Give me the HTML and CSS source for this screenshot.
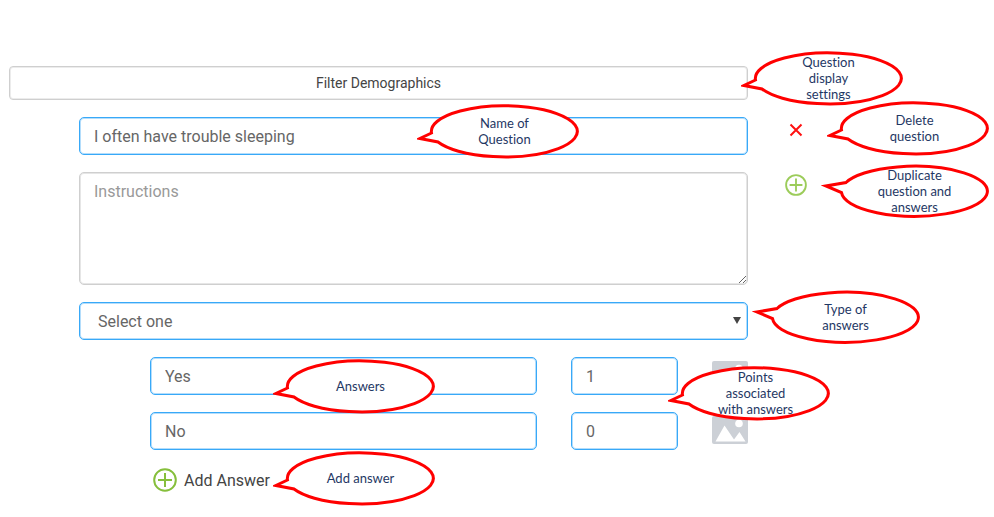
FILE: index.html
```html
<!DOCTYPE html>
<html lang="en">
<head>
    <meta charset="UTF-8">
    <meta name="viewport" content="width=device-width, initial-scale=1.0">
    <title>Question Editor</title>
    <link rel="stylesheet" href="styles.css">
</head>

<body>
    <!-- Shared shapes -->
    <svg class="sprite" aria-hidden="true">
        <symbol id="bubble-down" viewBox="0 0 168 56">
            <path d="M14.5 30 A73 25.500 0 1 1 21 39 L3 35.500 Z" />
        </symbol>
        <symbol id="bubble-up" viewBox="0 0 168 56">
            <path d="M25 19.5 A73 25 0 1 1 20.5 29.5 L5 23 Z" />
        </symbol>
        <symbol id="plus" viewBox="0 0 24 24">
            <circle cx="12" cy="12" r="10.8" />
            <path d="M12 5v14M5 12h14" />
        </symbol>
        <symbol id="picture" viewBox="0 0 36 28">
            <rect width="36" height="28" rx="2" fill="#ccd0d6" />
            <circle cx="27" cy="7.5" r="3.8" fill="#fff" />
            <path d="M3.500 25.500L12.500 9.500l9.500 14 5.500-7.500 6 9.500z" fill="#fff" />
        </symbol>
    </svg>

    <main class="page">
        <form class="editor">
            <button type="button" class="filter-button">Filter Demographics</button>

            <div class="row">
                <input type="text" class="field active" aria-label="Question" value="I often have trouble sleeping">
                <button type="button" class="icon-button" aria-label="Delete question">
                    <svg class="icon-delete" viewBox="0 0 14 14"><path d="M1.500 1.500l11 11M12.500 1.500l-11 11" /></svg>
                </button>
            </div>

            <div class="row">
                <textarea class="field instructions" aria-label="Instructions" placeholder="Instructions"></textarea>
                <button type="button" class="icon-button" aria-label="Duplicate question">
                    <svg class="icon-plus small"><use href="#plus" /></svg>
                </button>
            </div>

            <div class="row">
                <div class="select-box">
                    <select class="field active" aria-label="Type of answers">
                        <option>Select one</option>
                    </select>
                </div>
            </div>

            <div class="row">
                <div class="answer">
                    <input type="text" class="field active" aria-label="Answer 1" value="Yes">
                    <input type="text" class="field active points" aria-label="Points 1" value="1">
                    <svg class="icon-picture"><use href="#picture" /></svg>
                </div>
            </div>

            <div class="row">
                <div class="answer">
                    <input type="text" class="field active" aria-label="Answer 2" value="No">
                    <input type="text" class="field active points" aria-label="Points 2" value="0">
                    <svg class="icon-picture"><use href="#picture" /></svg>
                </div>
            </div>

            <button type="button" class="add-answer">
                <svg class="icon-plus"><use href="#plus" /></svg>
                Add Answer
            </button>
        </form>

        <!-- Callouts -->
        <div class="callout note-settings">
            <svg><use href="#bubble-down" /></svg>
            <p>Question<br>display<br>settings</p>
        </div>
        <div class="callout note-name">
            <svg><use href="#bubble-down" /></svg>
            <p>Name of<br>Question</p>
        </div>
        <div class="callout note-delete">
            <svg><use href="#bubble-down" /></svg>
            <p>Delete<br>question</p>
        </div>
        <div class="callout up note-duplicate">
            <svg><use href="#bubble-up" /></svg>
            <p>Duplicate<br>question and<br>answers</p>
        </div>
        <div class="callout up note-type">
            <svg><use href="#bubble-up" /></svg>
            <p>Type of<br>answers</p>
        </div>
        <div class="callout note-answers">
            <svg><use href="#bubble-down" /></svg>
            <p>Answers</p>
        </div>
        <div class="callout note-points">
            <svg><use href="#bubble-down" /></svg>
            <p>Points<br>associated<br>with answers</p>
        </div>
        <div class="callout note-add">
            <svg><use href="#bubble-down" /></svg>
            <p>Add answer</p>
        </div>
    </main>
</body>
</html>
```
FILE: styles.css
```css
* {
    box-sizing: border-box;
}

body {
    margin: 0;
    background: #fff;
    color: #666;
    font-family: Roboto, "Noto Sans", sans-serif;
    font-size: 16px;
}

.sprite {
    display: none;
}

.page {
    position: relative;
    padding: 66px 0 24px 9px;
}

.editor {
    display: flex;
    flex-direction: column;
    gap: 17px;
    margin: 0;
}

button {
    padding: 0;
    border: none;
    background: none;
    font-family: inherit;
    cursor: pointer;
}

.filter-button {
    height: 34px;
    margin-right: 246px;
    border: 1px solid #cfcfcf;
    border-radius: 4px;
    box-shadow: inset 0 0 0 1px #ececec;
    color: #444;
    font-size: 14px;
}

.row {
    display: grid;
    grid-template-columns: minmax(0, 1fr) 246px;
    padding-left: 70px;
}

.field {
    display: block;
    width: 100%;
    height: 38px;
    margin: 0;
    padding: 0 14px;
    border: 1px solid #cfcfcf;
    border-radius: 5px;
    box-shadow: inset 0 0 0 1px #e6e6e6;
    background: #fff;
    color: #666;
    font-family: inherit;
    font-size: 16px;
    outline: none;
}

.field.active {
    border-color: #38a9f8;
    box-shadow: inset 0 0 0 1px #b4ddfb;
}

.instructions {
    height: 113px;
    padding-top: 9px;
    resize: vertical;
}

.instructions::placeholder {
    color: #999;
}

.select-box {
    position: relative;
}

.select-box select {
    padding: 0 18px;
    appearance: none;
}

/* drop-down arrow */
.select-box::after {
    content: "";
    position: absolute;
    top: 15px;
    right: 7px;
    border: 4px solid transparent;
    border-top: 7px solid #444;
    border-bottom: none;
    pointer-events: none;
}

.answer {
    display: flex;
    align-items: center;
    gap: 34px;
    padding-left: 71px;
}

.answer .field {
    flex: 1;
    min-width: 0;
}

.answer .points {
    flex: 0 0 107px;
}

.icon-picture {
    flex: none;
    width: 36px;
    height: 28px;
    margin-bottom: 2px;
}

.icon-button {
    display: flex;
    align-items: center;
    justify-content: center;
    align-self: start;
    width: 24px;
    height: 26px;
    margin-left: 36px;
}

.icon-delete {
    width: 14px;
    height: 14px;
    fill: none;
    stroke: #f11;
    stroke-width: 2;
}

.icon-plus {
    width: 24px;
    height: 24px;
    fill: none;
    stroke: #86bf3c;
    stroke-width: 2;
}

.icon-plus.small {
    width: 22px;
    height: 22px;
    stroke: #9ccc5a;
}

.add-answer {
    display: flex;
    align-items: center;
    align-self: flex-start;
    gap: 7px;
    height: 26px;
    margin-left: 144px;
    color: #444;
    font-size: 16px;
}

.callout {
    position: absolute;
    display: flex;
    align-items: center;
    justify-content: center;
    width: 168px;
    height: 56px;
    padding-left: 7px;
    color: #1f3864;
    font-family: Lato, "Noto Sans", sans-serif;
    font-size: 13px;
    font-variant-ligatures: none;
    line-height: 16px;
    text-align: center;
}

.callout.up {
    padding-left: 19px;
}

.callout svg {
    position: absolute;
    top: 0;
    left: 0;
    width: 168px;
    height: 56px;
    fill: #fff;
    stroke: #f00;
    stroke-width: 3;
}

.callout p {
    position: relative;
    margin: 0;
}

.note-settings {
    top: 50px;
    left: 741px;
}

.note-name {
    top: 103px;
    left: 417px;
}

.note-delete {
    top: 100px;
    left: 827px;
}

.note-duplicate {
    top: 163px;
    left: 821px;
}

.note-type {
    top: 289px;
    left: 752px;
}

.note-answers {
    top: 358px;
    left: 273px;
}

.note-points {
    top: 365px;
    left: 668px;
}

.note-add {
    top: 450px;
    left: 273px;
}
```
